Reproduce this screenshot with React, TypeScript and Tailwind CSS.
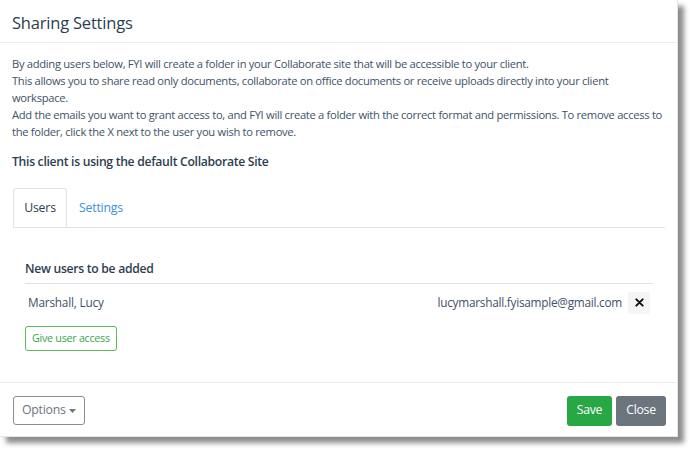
export default function App() {
  return (
    <div className="w-[693px] h-[452px] bg-white" style={{ fontFamily: '"Open Sans", "Noto Sans", sans-serif' }}>
      <div className="w-[678px] h-[437px] bg-white flex flex-col shadow-[6px_6px_5px_rgba(0,0,0,0.45)] border-r border-b border-[#e5e5e5]">
        {/* Header */}
        <div className="h-[43px] border-b border-[#e9ecef] flex items-center px-3 pt-[4px]">
          <h1 className="text-[16.5px] text-[#2c3e50] font-medium tracking-[-0.2px]">Sharing Settings</h1>
        </div>

        {/* Body */}
        <div className="flex-1 px-3 pt-[12px]">
          <div className="text-[11.2px] leading-[17px] text-[#3e5268] tracking-[-0.3px] whitespace-nowrap">
            <p>By adding users below, FYI will create a folder in your Collaborate site that will be accessible to your client.</p>
            <p>
              This allows you to share read only documents, collaborate on office documents or receive uploads directly into your client
              <br />
              workspace.
            </p>
            <p>
              Add the emails you want to grant access to, and FYI will create a folder with the correct format and permissions. To remove access to
              <br />
              the folder, click the X next to the user you wish to remove.
            </p>
          </div>
          <p className="mt-[13px] text-[12.2px] font-semibold text-[#2c3e50] tracking-[-0.3px]">This client is using the default Collaborate Site</p>

          {/* Tabs */}
          <div className="mt-[17px] flex border-b border-[#dee2e6] ml-px">
            <div className="h-[39px] w-[54px] -mb-px border border-[#dee2e6] border-b-white rounded-t-[3px] bg-white flex items-center justify-center text-[12.3px] text-[#2c3e50] tracking-[-0.2px]">
              Users
            </div>
            <div className="h-[39px] px-3 flex items-center text-[12.3px] text-[#3a8fe0] tracking-[-0.2px]">Settings</div>
          </div>

          {/* Users list */}
          <div className="pl-[13px] pr-[12px] pt-[32px]">
            <div className="border-b border-[#dee2e6] pb-[4px] text-[12.2px] font-semibold text-[#2c3e50] tracking-[-0.3px]">New users to be added</div>
            <div className="flex items-center h-[36px] pl-[3px] pt-[2px]">
              <span className="flex-1 text-[11.8px] text-[#3e5268] tracking-[-0.2px]">Marshall, Lucy</span>
              <span className="text-[11.8px] text-[#3e5268] tracking-[-0.25px]">lucymarshall.fyisample@gmail.com</span>
              <button className="ml-[6px] mr-[3px] w-[22px] h-[22px] bg-[#f4f5f6] rounded-[2px] flex items-center justify-center">
                <svg width="9" height="9" viewBox="0 0 10 10">
                  <path d="M1.5 1.5 L8.5 8.5 M8.5 1.5 L1.5 8.5" stroke="#111" strokeWidth="2.2" strokeLinecap="round" />
                </svg>
              </button>
            </div>
            <button className="mt-[6px] h-[25px] px-[6px] border border-[#5cb85c] rounded-[3px] text-[10.8px] text-[#3aa64a] tracking-[-0.3px]">
              Give user access
            </button>
          </div>
        </div>

        {/* Footer */}
        <div className="h-[54px] border-t border-[#e9ecef] flex items-center pl-3 pr-[11px] pt-[2px]">
          <button className="h-[29px] px-[8px] ml-px border border-[#868e96] rounded-[3px] flex items-center text-[12.3px] text-[#6c757d] tracking-[-0.25px]">
            Options
            <svg className="ml-[3px]" width="7" height="4" viewBox="0 0 7 4"><path d="M0 0 L7 0 L3.5 4 Z" fill="#6c757d" /></svg>
          </button>
          <div className="flex-1" />
          <button className="h-[30px] w-[45px] bg-[#28a745] rounded-[3px] text-[12.3px] text-white tracking-[-0.3px]">Save</button>
          <button className="ml-[4px] h-[30px] w-[50px] bg-[#6c757d] rounded-[3px] text-[12.3px] text-white tracking-[-0.3px]">Close</button>
        </div>
      </div>
    </div>
  );
}
